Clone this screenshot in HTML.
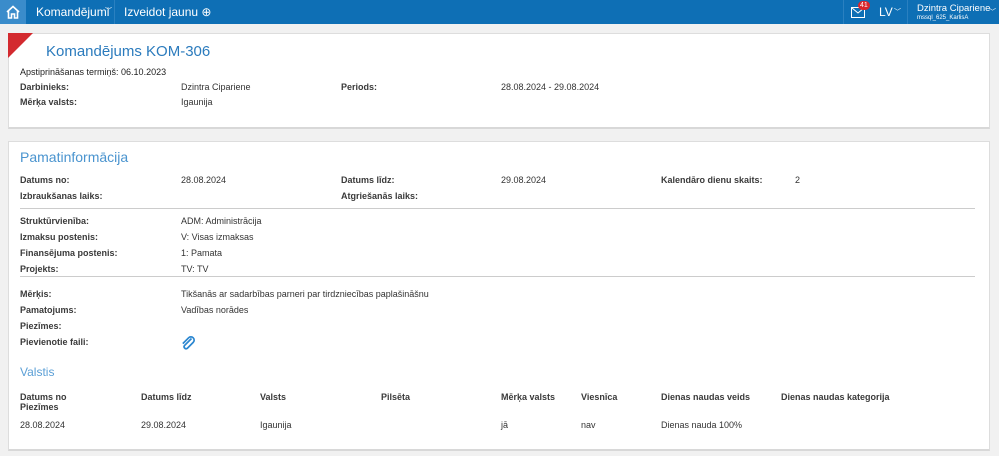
<!DOCTYPE html>
<html><head><meta charset="utf-8"><style>
*{margin:0;padding:0;box-sizing:border-box}
body{width:999px;height:456px;background:#f1f1f1;font-family:"Liberation Sans",sans-serif;font-size:9px;color:#333;position:relative;overflow:hidden}
.top{position:absolute;left:0;top:0;width:999px;height:24px;background:#0e6fb5;color:#fff}
.top .home{position:absolute;left:0;top:0;width:26px;height:24px;background:#3a8ccb}
.top span{position:absolute;font-size:12px;top:5px}
.card{position:absolute;left:8px;right:9px;background:#fff;border:1px solid #ddd;border-bottom:2px solid #d8d8d8}
.t{position:absolute;white-space:nowrap}
.b{font-weight:bold;color:#3a3a3a}
.h{color:#4a94cf;font-size:14px}
.hr{position:absolute;left:11px;right:14px;height:1px;background:#ccc}
</style></head><body>
<div class="top">
<div class="home"><svg width="26" height="24" viewBox="0 0 26 24"><path d="M7 12 L13 6.5 L19 12 M8.5 11 V18 H11.5 V14 H14.5 V18 H17.5 V11" fill="none" stroke="#fff" stroke-width="1.6"/></svg></div>
<span style="left:36px">Komandējumi</span><span style="left:105px;top:6px;font-size:7px">﹀</span>
<div style="position:absolute;left:114px;top:0;width:1px;height:24px;background:#2a80c0"></div>
<span style="left:124px">Izveidot jaunu ⊕</span>
<div style="position:absolute;left:843px;top:0;width:1px;height:24px;background:#2a80c0"></div>
<svg style="position:absolute;left:851px;top:7px" width="14" height="11"><rect x="0.5" y="0.5" width="13" height="10" fill="none" stroke="#fff"/><path d="M1 1 L7 6 L13 1" fill="none" stroke="#fff"/></svg>
<div style="position:absolute;left:858px;top:1px;background:#d9262c;border-radius:5px;font-size:7px;padding:0 2px;line-height:9px">41</div>
<span style="left:879px">LV</span><span style="left:894px;top:7px;font-size:7px">﹀</span>
<div style="position:absolute;left:907px;top:0;width:1px;height:24px;background:#2a80c0"></div>
<span style="left:917px;top:3px;font-size:9.5px">Dzintra Cipariene</span>
<span style="left:917px;top:15px;font-size:6px">mssql_625_KarlisA</span>
<span style="left:989px;top:7px;font-size:7px">﹀</span>
</div>

<div class="card" style="top:33px;height:96px">
<svg style="position:absolute;left:-1px;top:-1px" width="26" height="26"><path d="M0 0 H25 L0 25Z" fill="#d32a2f"/></svg>
<div class="t" style="left:37px;top:9px;font-size:15px;color:#2b7bbd">Komandējums KOM-306</div>
<div class="t" style="left:11px;top:33px;color:#222">Apstiprināšanas termiņš: 06.10.2023</div>
<div class="t b" style="left:11px;top:48px">Darbinieks:</div><div class="t" style="left:172px;top:48px">Dzintra Cipariene</div>
<div class="t b" style="left:332px;top:48px">Periods:</div><div class="t" style="left:492px;top:48px">28.08.2024 - 29.08.2024</div>
<div class="t b" style="left:11px;top:63px">Mērķa valsts:</div><div class="t" style="left:172px;top:63px">Igaunija</div>
</div>

<div class="card" style="top:141px;height:310px">
<div class="t h" style="left:11px;top:7px">Pamatinformācija</div>
<div class="t b" style="left:11px;top:33px">Datums no:</div><div class="t" style="left:172px;top:33px">28.08.2024</div>
<div class="t b" style="left:332px;top:33px">Datums līdz:</div><div class="t" style="left:492px;top:33px">29.08.2024</div>
<div class="t b" style="left:652px;top:33px">Kalendāro dienu skaits:</div><div class="t" style="left:786px;top:33px">2</div>
<div class="t b" style="left:11px;top:49px">Izbraukšanas laiks:</div>
<div class="t b" style="left:332px;top:49px">Atgriešanās laiks:</div>
<div class="hr" style="top:66px"></div>
<div class="t b" style="left:11px;top:74px">Struktūrvienība:</div><div class="t" style="left:172px;top:74px">ADM: Administrācija</div>
<div class="t b" style="left:11px;top:90px">Izmaksu postenis:</div><div class="t" style="left:172px;top:90px">V: Visas izmaksas</div>
<div class="t b" style="left:11px;top:106px">Finansējuma postenis:</div><div class="t" style="left:172px;top:106px">1: Pamata</div>
<div class="t b" style="left:11px;top:122px">Projekts:</div><div class="t" style="left:172px;top:122px">TV: TV</div>
<div class="hr" style="top:134px"></div>
<div class="t b" style="left:11px;top:147px">Mērķis:</div><div class="t" style="left:172px;top:147px">Tikšanās ar sadarbības parneri par tirdzniecības paplašināšnu</div>
<div class="t b" style="left:11px;top:163px">Pamatojums:</div><div class="t" style="left:172px;top:163px">Vadības norādes</div>
<div class="t b" style="left:11px;top:179px">Piezīmes:</div>
<div class="t b" style="left:11px;top:195px">Pievienotie faili:</div>
<svg style="position:absolute;left:171px;top:193px" width="16" height="17" viewBox="0 0 16 17"><path d="M11.5 3.5 L4.5 10.5 A2 2 0 0 0 7.3 13.3 L13.2 7.4 A3.2 3.2 0 0 0 8.6 2.8 L2.8 8.6" fill="none" stroke="#2a86d0" stroke-width="1.7"/></svg>
<div class="t" style="left:11px;top:223px;font-size:12px;color:#5b9fd6">Valstis</div>
<div class="t b" style="left:11px;top:250px">Datums no<br>Piezīmes</div>
<div class="t b" style="left:132px;top:250px">Datums līdz</div>
<div class="t b" style="left:251px;top:250px">Valsts</div>
<div class="t b" style="left:372px;top:250px">Pilsēta</div>
<div class="t b" style="left:492px;top:250px">Mērķa valsts</div>
<div class="t b" style="left:572px;top:250px">Viesnīca</div>
<div class="t b" style="left:652px;top:250px">Dienas naudas veids</div>
<div class="t b" style="left:772px;top:250px">Dienas naudas kategorija</div>
<div class="t" style="left:11px;top:278px">28.08.2024</div>
<div class="t" style="left:132px;top:278px">29.08.2024</div>
<div class="t" style="left:251px;top:278px">Igaunija</div>
<div class="t" style="left:492px;top:278px">jā</div>
<div class="t" style="left:572px;top:278px">nav</div>
<div class="t" style="left:652px;top:278px">Dienas nauda 100%</div>
</div>
</body></html>
